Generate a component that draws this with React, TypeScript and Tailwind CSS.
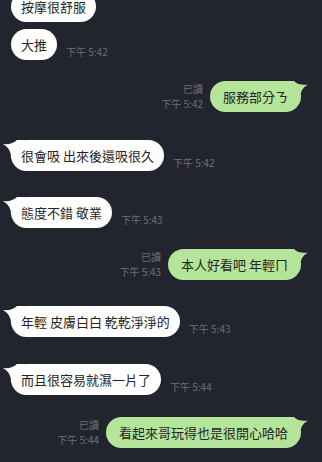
import type { ReactNode } from "react";

type Side = "left" | "right";

const Tail = ({ side }: { side: Side }) =>
  side === "left" ? (
    <svg
      className="absolute -left-[9px] top-0"
      width="22"
      height="18"
      viewBox="0 0 22 18"
    >
      <path d="M1 4 Q 10 5 15 0 L 22 0 L 22 18 L 9 18 Q 9.5 9 1 4 Z" fill="#ffffff" />
    </svg>
  ) : (
    <svg
      className="absolute -right-[8px] top-0"
      width="22"
      height="18"
      viewBox="0 0 22 18"
    >
      <path d="M21 3.5 Q 12 5 7 0 L 0 0 L 0 18 L 13 18 Q 12.5 8 21 3.5 Z" fill="#b5e59a" />
    </svg>
  );

const Bubble = ({
  side,
  tail,
  children,
}: {
  side: Side;
  tail?: boolean;
  children: ReactNode;
}) => (
  <div className="relative shrink-0">
    {tail && <Tail side={side} />}
    <div
      className={
        side === "left"
          ? "relative whitespace-pre rounded-full bg-white px-[10px] py-[7px] text-[13px] leading-[17px] text-[#242424]"
          : "relative whitespace-pre rounded-full bg-[#b5e59a] px-[13px] py-[7px] text-[13px] leading-[17px] text-[#242424]"
      }
    >
      {children}
    </div>
  </div>
);

const Time = ({ t }: { t: string }) => (
  <span className="mb-[2px] whitespace-pre text-[10px] leading-[13px] text-[#6d717a]">
    {t}
  </span>
);

const Left = ({
  text,
  time,
  tail,
  mt,
}: {
  text: string;
  time?: string;
  tail?: boolean;
  mt: string;
}) => (
  <div className={`flex items-end gap-[9px] ${mt}`}>
    <Bubble side="left" tail={tail}>
      {text}
    </Bubble>
    {time && <Time t={time} />}
  </div>
);

const Right = ({ text, time, mt }: { text: string; time: string; mt: string }) => (
  <div className={`flex items-end justify-end gap-[7px] ${mt}`}>
    <div className="mb-[1px] flex flex-col items-end text-[10px] leading-[15px] text-[#6d717a]">
      <span>已讀</span>
      <span className="whitespace-pre">{time}</span>
    </div>
    <Bubble side="right" tail>
      {text}
    </Bubble>
  </div>
);

export default function App() {
  return (
    <div
      className="flex h-[462px] w-[322px] flex-col overflow-hidden bg-[#22252e] pl-[11px] pr-[21px]"
      style={{ fontFamily: '"Noto Sans CJK TC", "Noto Sans", sans-serif' }}
    >
      <Left mt="-mt-[9px]" text="按摩很舒服" />
      <Left mt="mt-[7px]" text="大推" time="下午 5:42" />
      <Right mt="mt-[21px]" text="服務部分ㄋ" time="下午 5:42" />
      <Left mt="mt-[28px]" tail text="很會吸 出來後還吸很久" time="下午 5:42" />
      <Left mt="mt-[26px]" tail text="態度不錯 敬業" time="下午 5:43" />
      <Right mt="mt-[21px]" text="本人好看吧 年輕ㄇ" time="下午 5:43" />
      <Left mt="mt-[26px]" tail text="年輕 皮膚白白 乾乾淨淨的" time="下午 5:43" />
      <Left mt="mt-[27px]" tail text="而且很容易就濕一片了" time="下午 5:44" />
      <Right mt="mt-[22px]" text="看起來哥玩得也是很開心哈哈" time="下午 5:44" />
    </div>
  );
}
